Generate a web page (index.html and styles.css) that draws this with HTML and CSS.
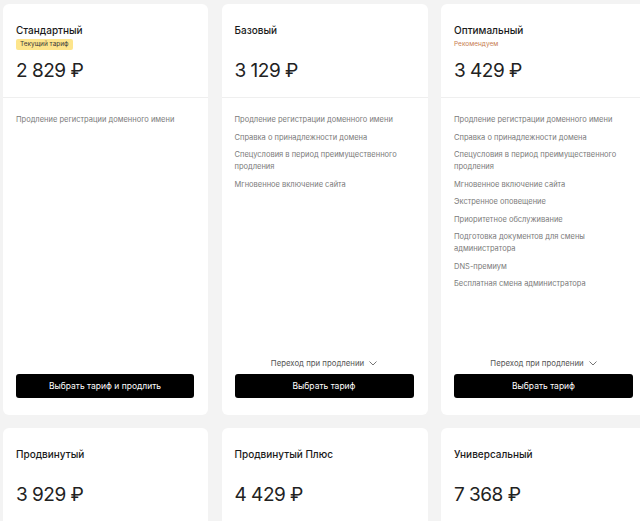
FILE: index.html
```html
<!DOCTYPE html>
<html lang="ru">
<head>
<meta charset="utf-8">
<title>Тарифы</title>
<link rel="stylesheet" href="styles.css">
</head>
<body>
<div class="page">
  <div class="grid">
    <div class="card">
      <div class="head">
        <div class="title">Стандартный</div>
        <div class="tagrow"><span class="badge">Текущий тариф</span></div>
        <div class="price">2 829 ₽</div>
      </div>
      <div class="body">
        <ul class="features">
          <li>Продление регистрации доменного имени</li>
        </ul>
        <div class="foot">
          <button class="btn">Выбрать тариф и продлить</button>
        </div>
      </div>
    </div>

    <div class="card">
      <div class="head">
        <div class="title">Базовый</div>
        <div class="tagrow"></div>
        <div class="price">3 129 ₽</div>
      </div>
      <div class="body">
        <ul class="features">
          <li>Продление регистрации доменного имени</li>
          <li>Справка о принадлежности домена</li>
          <li>Спецусловия в период преимущественного продления</li>
          <li>Мгновенное включение сайта</li>
        </ul>
        <div class="foot">
          <div class="switch">Переход при продлении
            <svg class="chev" viewBox="0 0 8 5" width="8" height="5"><path d="M0.5 0.5 L4 4 L7.5 0.5" fill="none" stroke="#666" stroke-width="0.9"/></svg>
          </div>
          <button class="btn">Выбрать тариф</button>
        </div>
      </div>
    </div>

    <div class="card">
      <div class="head">
        <div class="title">Оптимальный</div>
        <div class="tagrow"><span class="rec">Рекомендуем</span></div>
        <div class="price">3 429 ₽</div>
      </div>
      <div class="body">
        <ul class="features">
          <li>Продление регистрации доменного имени</li>
          <li>Справка о принадлежности домена</li>
          <li>Спецусловия в период преимущественного продления</li>
          <li>Мгновенное включение сайта</li>
          <li>Экстренное оповещение</li>
          <li>Приоритетное обслуживание</li>
          <li>Подготовка документов для смены администратора</li>
          <li>DNS-премиум</li>
          <li>Бесплатная смена администратора</li>
        </ul>
        <div class="foot">
          <div class="switch">Переход при продлении
            <svg class="chev" viewBox="0 0 8 5" width="8" height="5"><path d="M0.5 0.5 L4 4 L7.5 0.5" fill="none" stroke="#666" stroke-width="0.9"/></svg>
          </div>
          <button class="btn">Выбрать тариф</button>
        </div>
      </div>
    </div>

    <div class="card">
      <div class="head">
        <div class="title">Продвинутый</div>
        <div class="tagrow"></div>
        <div class="price">3 929 ₽</div>
      </div>
    </div>
    <div class="card">
      <div class="head">
        <div class="title">Продвинутый Плюс</div>
        <div class="tagrow"></div>
        <div class="price">4 429 ₽</div>
      </div>
    </div>
    <div class="card">
      <div class="head">
        <div class="title">Универсальный</div>
        <div class="tagrow"></div>
        <div class="price">7 368 ₽</div>
      </div>
    </div>
  </div>
</div>
</body>
</html>
```

FILE: styles.css
```css
* { box-sizing: border-box; }
html, body {
  margin: 0;
  padding: 0;
  background: #f3f3f3;
  overflow: hidden;
  width: 640px;
  height: 521px;
}
body {
  font-family: Inter, "Noto Sans", "Liberation Sans", sans-serif;
  color: #1a1a1a;
}
.page {
  padding: 4px 0 0 3px;
}
.grid {
  display: grid;
  grid-template-columns: 205px 206px 206px;
  column-gap: 13.5px;
  row-gap: 13px;
}
.card {
  background: #fff;
  border-radius: 6px;
  display: flex;
  flex-direction: column;
  min-height: 100px;
}
.grid .card:nth-child(-n+3) {
  height: 411px;
}
.head {
  padding: 19px 14px 14px 13px;
  border-bottom: 1px solid #efefef;
}
.title {
  font-size: 10px;
  font-weight: 500;
  line-height: 14px;
  color: #1a1a1a;
}
.tagrow {
  height: 11px;
  margin-top: 2px;
  display: flex;
  align-items: center;
}
.badge {
  background: #fde58c;
  color: #3a3a3a;
  font-size: 6.5px;
  line-height: 11px;
  padding: 0 4px;
  border-radius: 2px;
}
.rec {
  color: #c77d52;
  font-size: 6.5px;
  line-height: 11px;
}
.price {
  margin-top: 9px;
  font-size: 19px;
  line-height: 24px;
  font-weight: 400;
  color: #222;
  letter-spacing: -0.5px;
}
.body {
  flex: 1;
  display: flex;
  flex-direction: column;
  padding: 16px 14px 17px 13px;
}
.features {
  list-style: none;
  margin: 0;
  padding: 0;
  display: flex;
  flex-direction: column;
  gap: 5.5px;
}
.features li {
  font-size: 7.5px;
  line-height: 12px;
  color: #7a7a7a;
}
.foot {
  margin-top: auto;
  display: flex;
  flex-direction: column;
  align-items: stretch;
}
.switch {
  display: flex;
  align-items: center;
  justify-content: center;
  gap: 5px;
  font-size: 7.8px;
  line-height: 12px;
  color: #555;
  margin-bottom: 5px;
}
.chev { display: block; }
.btn {
  height: 24px;
  border: 0;
  border-radius: 3px;
  background: #000;
  color: #fff;
  font-family: inherit;
  font-size: 8.5px;
  font-weight: 400;
  width: 100%;
}
```
